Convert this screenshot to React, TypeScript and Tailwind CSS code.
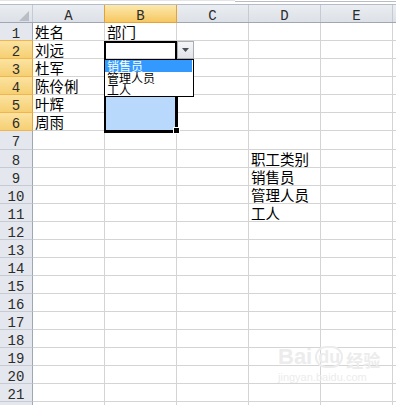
import React from 'react';

const COLS = ['A', 'B', 'C', 'D', 'E'];
const ROWS = Array.from({ length: 22 }, (_, i) => i + 1);
const DATA: Record<string, string> = {
  A1: '姓名',
  B1: '部门',
  A2: '刘远',
  A3: '杜军',
  A4: '陈伶俐',
  A5: '叶辉',
  A6: '周雨',
  D8: '职工类别',
  D9: '销售员',
  D10: '管理人员',
  D11: '工人',
};

const isSelRow = (r: number) => r >= 2 && r <= 6;

function RowHeader({ r }: { r: number }) {
  const sel = isSelRow(r);
  const nextSel = isSelRow(r + 1);
  return (
    <div
      className={[
        'w-[33px] shrink-0 border-r border-b flex justify-center pt-[4px] text-[14px] leading-[14px] text-[#2b2b2b] font-["Liberation_Mono",monospace]',
        sel
          ? 'bg-gradient-to-b from-[#fbe3a0] to-[#f6cf72] border-r-[#e3a33c] border-b-[#f0b550]'
          : nextSel
          ? 'bg-[#e4e8ee] border-r-[#9ea7b3] border-b-[#f0b550]'
          : 'bg-[#e4e8ee] border-r-[#9ea7b3] border-b-[#c5cad3]',
      ].join(' ')}
    >
      {r <= 21 ? r : ''}
    </div>
  );
}

function Cell({ c, r }: { c: string; r: number }) {
  const key = `${c}${r}`;
  const text = DATA[key];
  const blue = c === 'B' && r >= 3 && r <= 6;
  return (
    <div
      className={[
        'w-[72px] shrink-0 border-r border-b pl-[2px] text-[14.5px] leading-[17px] text-black whitespace-nowrap font-["Noto_Sans_CJK_SC",sans-serif]',
        blue ? 'bg-[#b8d8fc] border-b-[#b8d8fc]' : 'bg-white border-b-[#d4d4d4]',
        'border-r-[#d4d4d4]',
      ].join(' ')}
    >
      {text ?? ''}
    </div>
  );
}

export default function App() {
  return (
    <div className="relative w-[396px] h-[405px] overflow-hidden bg-white">
      {/* top strip (formula bar remnant) */}
      <div className="relative h-[4px] bg-white">
        <div className="absolute left-0 top-0 w-[235px] h-[1px] bg-[#e2e4e8]" />
        <div className="absolute left-[235px] right-0 top-[1px] h-[1px] bg-[#b9bcc2]" />
      </div>

      {/* column header */}
      <div className="flex h-[19px] border-t border-t-[#b5bcc6] border-b border-b-[#9ea7b3] bg-gradient-to-b from-[#eaedf1] to-[#dde1e7]">
        <div className="relative w-[33px] shrink-0 border-r border-r-[#c5cad3]">
          <svg className="absolute left-[19px] top-[6px]" width="10" height="10" viewBox="0 0 10 10">
            <polygon points="10,0 10,10 0,10" fill="#b9bec6" />
          </svg>
        </div>
        {COLS.map((c) => {
          const sel = c === 'B';
          const nextSel = c === 'A';
          return (
            <div
              key={c}
              className={[
                'w-[72px] shrink-0 border-r flex justify-center pt-[4px] text-[14px] leading-[14px] text-[#2b2b2b] font-["Liberation_Mono",monospace]',
                sel
                  ? 'bg-gradient-to-b from-[#fce9ac] to-[#f5c760] border-r-[#e2a23a] -mb-[1px] border-b border-b-[#e8a23a]'
                  : nextSel
                  ? 'border-r-[#e2a23a]'
                  : 'border-r-[#c5cad3]',
              ].join(' ')}
            >
              {c}
            </div>
          );
        })}
        <div className="flex-1" />
      </div>

      {/* rows */}
      {ROWS.map((r) => (
        <div key={r} className={`flex ${r === 7 ? 'h-[19px]' : 'h-[18px]'}`}>
          <RowHeader r={r} />
          {COLS.map((c) => (
            <Cell key={c} c={c} r={r} />
          ))}
          <div className="flex-1 border-b border-b-[#d4d4d4]" />
        </div>
      ))}

      {/* selection border B2:B6 */}
      <div className="absolute left-[104px] top-[41px] w-[74px] h-[92px] border-l-2 border-t-2 border-r-[3px] border-b-[3px] border-black pointer-events-none" />
      {/* fill handle */}
      <div className="absolute left-[173px] top-[127px] w-[7px] h-[7px] bg-black border border-white" />

      {/* dropdown button */}
      <div className="absolute left-[177px] top-[41px] w-[17px] h-[18px] border border-[#a9aeb5] bg-gradient-to-b from-[#f4f5f7] to-[#e1e4e8] flex items-center justify-center">
        <svg width="7" height="4" viewBox="0 0 7 4">
          <polygon points="0,0 7,0 3.5,4" fill="#4a4f57" />
        </svg>
      </div>

      {/* dropdown list */}
      <div className="absolute left-[104px] top-[59px] w-[90px] h-[38px] border border-black bg-white font-['Noto_Sans_CJK_SC',sans-serif] text-[12px] leading-[12px] text-black">
        <div className="h-[12px] bg-[#3399ff] text-white pl-[2px] mr-[1px] whitespace-nowrap">销售员</div>
        <div className="h-[12px] pl-[2px] whitespace-nowrap">管理人员</div>
        <div className="h-[12px] pl-[2px] whitespace-nowrap">工人</div>
      </div>

      {/* watermark */}
      <div className="absolute left-[278px] top-[346px] pointer-events-none select-none text-[#ececec]">
        <div className="flex items-end gap-[3px] leading-none">
          <span className="font-['Liberation_Sans',sans-serif] font-bold text-[22px]">Bai</span>
          <span className="font-['Liberation_Sans',sans-serif] font-bold text-[18px] rounded-full border-2 border-[#ececec] px-[1px]">du</span>
          <span className="font-['Noto_Sans_CJK_SC',sans-serif] font-bold text-[17px]">经验</span>
        </div>
        <div className="font-['Liberation_Sans',sans-serif] text-[11px] leading-none mt-[4px]">jingyan.baidu.com</div>
      </div>
    </div>
  );
}
